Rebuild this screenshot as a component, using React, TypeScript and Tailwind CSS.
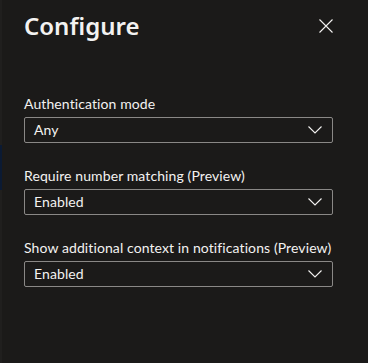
interface SelectFieldProps {
  label: string;
  value: string;
}

const Chevron = () => (
  <svg width="14" height="8" viewBox="0 0 14 8" fill="none" className="text-[#f3f2f1]">
    <polyline points="0.5,0.5 7,7 13.5,0.5" stroke="currentColor" strokeWidth="1.1" />
  </svg>
);

const CloseIcon = () => (
  <svg width="14" height="14" viewBox="0 0 14 14" fill="none" className="text-[#f3f2f1]">
    <path d="M0.5 0.5 L13.5 13.5 M13.5 0.5 L0.5 13.5" stroke="currentColor" strokeWidth="1.1" />
  </svg>
);

const SelectField: React.FC<SelectFieldProps> = ({ label, value }) => {
  return (
    <div className="flex flex-col">
      <label className="whitespace-nowrap text-[14px] leading-[20px] tracking-[0.1px] text-[#f3f2f1]">
        {label}
      </label>
      <div className="mt-[3px] flex h-[26px] items-center justify-between rounded-[2px] border border-[#8a8886] pl-[9px] pr-[10px]">
        <span className="text-[14px] leading-[20px] tracking-[0.1px] text-[#f3f2f1]">{value}</span>
        <Chevron />
      </div>
    </div>
  );
};

const App: React.FC = () => {
  return (
    <div className="flex h-[363px] w-[368px] bg-[#1b1a19] font-['Lato',sans-serif]">
      <div className="flex w-[2px] flex-col bg-[#201f1e]">
        <div className="mt-[145px] h-[45px] bg-[#0b1a33]" />
      </div>
      <div className="flex flex-1 flex-col pl-[22px] pr-[35px]">
        <div className="mt-[8px] flex items-center justify-between">
          <h1 className="font-['Noto_Sans',sans-serif] text-[24px] font-semibold leading-[36px] text-[#f3f2f1]">
            Configure
          </h1>
          <CloseIcon />
        </div>
        <div className="mt-[50px] flex flex-col gap-[23px]">
          <SelectField label="Authentication mode" value="Any" />
          <SelectField label="Require number matching (Preview)" value="Enabled" />
          <SelectField label="Show additional context in notifications (Preview)" value="Enabled" />
        </div>
      </div>
    </div>
  );
};

export default App;
